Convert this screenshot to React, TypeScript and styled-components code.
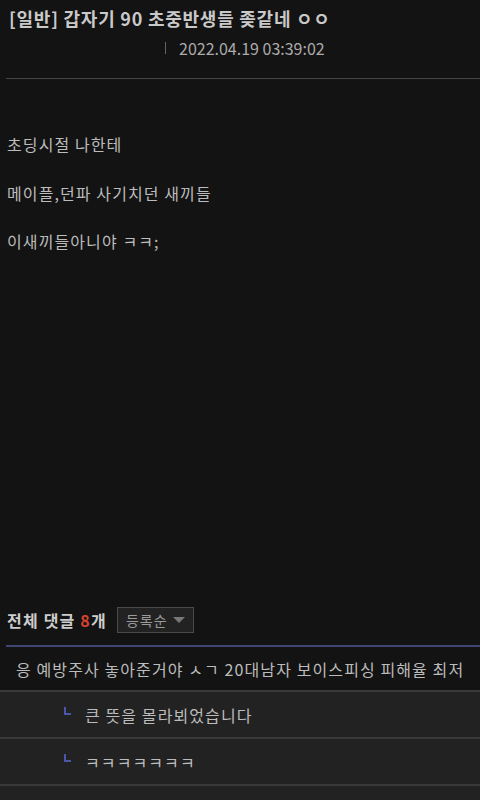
import React from "react";
import styled, { createGlobalStyle } from "styled-components";

const Global = createGlobalStyle`
  html, body { margin: 0; padding: 0; background: #131313; }
  body { font-family: "Noto Sans CJK KR", "Noto Sans", sans-serif; }
`;

const Page = styled.div`
  width: 480px;
  height: 800px;
  overflow: hidden;
  background: #131313;
  color: #bdbdbd;
`;

const Header = styled.div`
  padding: 7px 0 0 9px;
`;

const Title = styled.h1`
  margin: 0;
  font-size: 18px;
  line-height: 22px;
  font-weight: 700;
  letter-spacing: 0.75px;
  color: #c9c9c9;
  white-space: nowrap;
`;

const DateRow = styled.div`
  display: flex;
  align-items: center;
  gap: 13px;
  padding-left: 156px;
  margin-top: 8px;
  height: 22px;
  font-size: 16px;
  color: #ababab;
`;

const Bar = styled.span`
  width: 1px;
  height: 12px;
  background: #666;
`;

const Rule = styled.hr`
  margin: 19px 0 0 6px;
  border: 0;
  height: 1px;
  background: #454545;
`;

const Body = styled.div`
  padding: 54px 0 0 7px;
  display: flex;
  flex-direction: column;
  gap: 26.5px;
  height: 498px;
  box-sizing: border-box;
`;

const Para = styled.p`
  margin: 0;
  font-size: 16px;
  line-height: 22px;
  color: #bcbcbc;
  letter-spacing: 1.1px;
`;

const CommentHead = styled.div`
  display: flex;
  align-items: center;
  gap: 10px;
  padding: 30px 0 0 7px;
  height: 26px;
`;

const HeadLabel = styled.span`
  font-size: 16px;
  font-weight: 700;
  letter-spacing: 1.2px;
  color: #cdcdcd;
`;

const Count = styled.span`
  color: #d6412f;
`;

const Sort = styled.div`
  display: flex;
  align-items: center;
  justify-content: space-between;
  width: 77px;
  height: 26px;
  box-sizing: border-box;
  padding: 0 8px 0 8px;
  border: 1px solid #4a4a4a;
  background: #222;
  font-size: 14px;
  letter-spacing: 1px;
  color: #9a9a9a;
`;

const Tri = styled.span`
  width: 0;
  height: 0;
  border-left: 6px solid transparent;
  border-right: 6px solid transparent;
  border-top: 6px solid #777;
`;

const BlueRule = styled.div`
  margin: 12px 0 0 6px;
  height: 2px;
  background: #3f4470;
`;

const Row = styled.div<{ $reply?: boolean }>`
  display: flex;
  align-items: center;
  height: ${(p) => (p.$reply ? "45px" : "43px")};
  padding-left: ${(p) => (p.$reply ? "64px" : "16px")};
  gap: 14px;
  background: ${(p) => (p.$reply ? "#222" : "#131313")};
  border-bottom: 2px solid #393939;
  white-space: nowrap;
  overflow: hidden;
  font-size: 16px;
  color: #bcbcbc;
  letter-spacing: 1.1px;
`;

const ReplyMark = styled.span`
  width: 7px;
  height: 8px;
  margin-top: -8px;
  border-left: 2px solid #4b56a8;
  border-bottom: 2px solid #4b56a8;
  box-sizing: border-box;
  flex: none;
`;

export default function App() {
  return (
    <Page>
      <Global />
      <Header>
        <Title>[일반] 갑자기 90 초중반생들 좆같네 ㅇㅇ</Title>
        <DateRow>
          <Bar />
          <span>2022.04.19 03:39:02</span>
        </DateRow>
      </Header>
      <Rule />
      <Body>
        <Para>초딩시절 나한테</Para>
        <Para>메이플,던파 사기치던 새끼들</Para>
        <Para>이새끼들아니야 ㅋㅋ;</Para>
      </Body>
      <CommentHead>
        <HeadLabel>
          전체 댓글 <Count>8</Count>개
        </HeadLabel>
        <Sort>
          <span>등록순</span>
          <Tri />
        </Sort>
      </CommentHead>
      <BlueRule />
      <Row>응 예방주사 놓아준거야 ㅅㄱ 20대남자 보이스피싱 피해율 최저</Row>
      <Row $reply>
        <ReplyMark />
        <span>큰 뜻을 몰라뵈었습니다</span>
      </Row>
      <Row $reply>
        <ReplyMark />
        <span>ㅋㅋㅋㅋㅋㅋㅋ</span>
      </Row>
      <Row $reply />
    </Page>
  );
}
